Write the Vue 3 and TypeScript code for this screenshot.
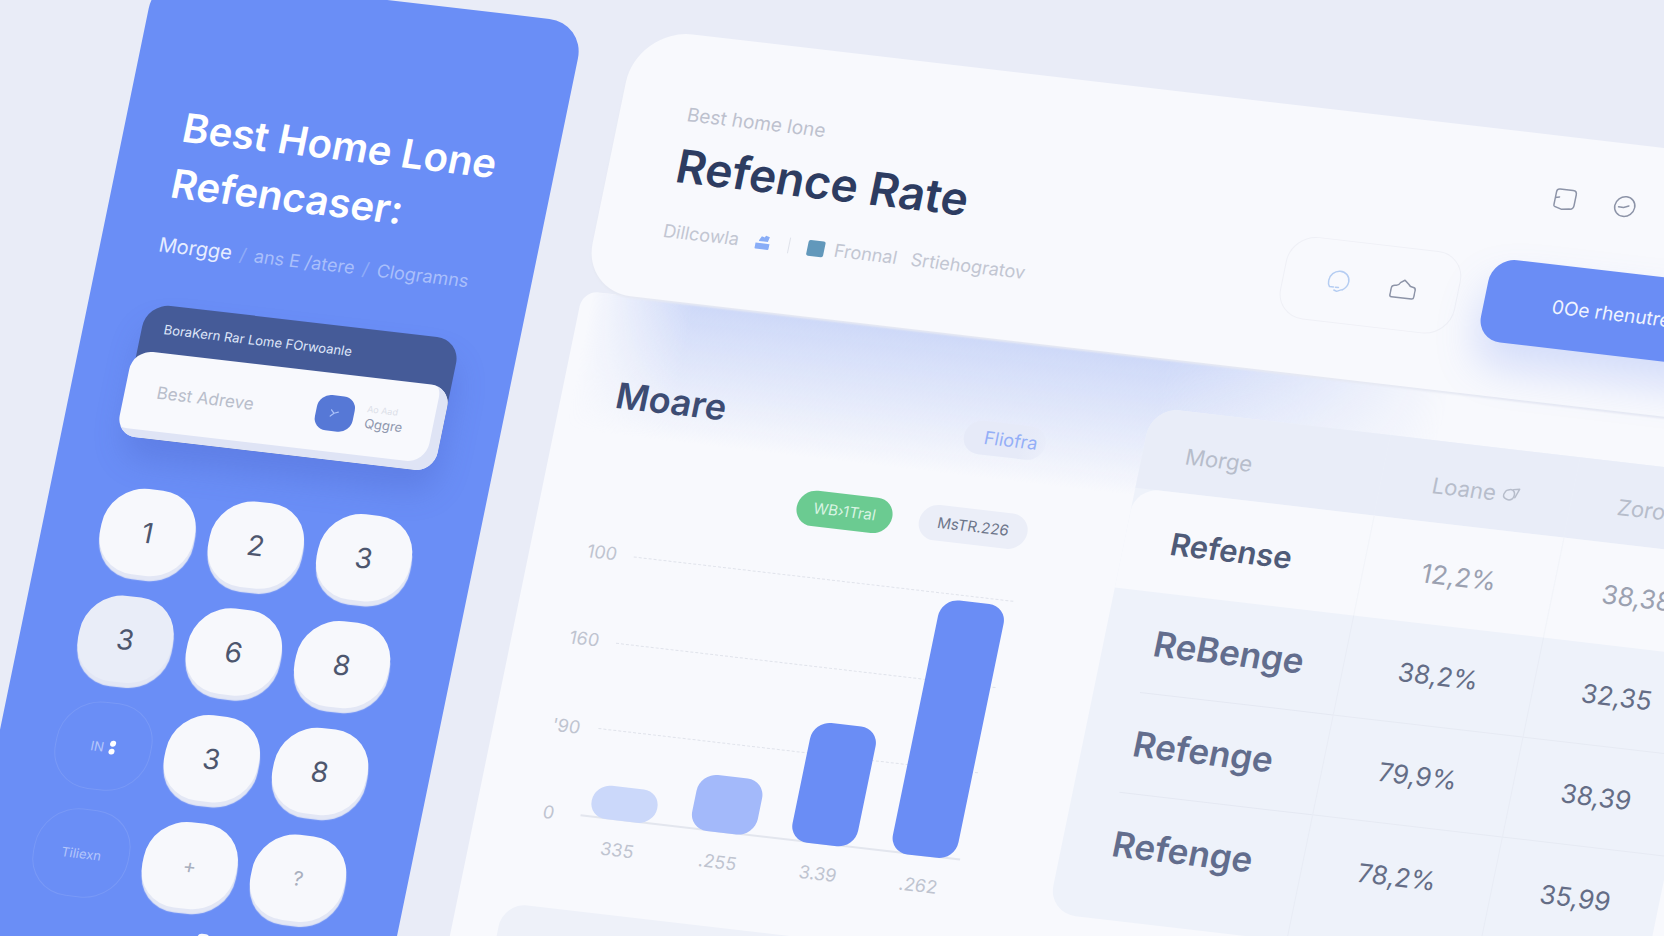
<script setup lang="ts">
interface Key {
  label: string
  tone: 'solid' | 'pressed' | 'ghost' | 'soft'
}
interface Bar {
  label: string
  height: number
  shade: string
}
interface RateRow {
  name: string
  rate: string
  amount: string
}

const keys: Key[] = [
  { label: '1', tone: 'solid' },
  { label: '2', tone: 'solid' },
  { label: '3', tone: 'solid' },
  { label: '3', tone: 'pressed' },
  { label: '6', tone: 'solid' },
  { label: '8', tone: 'solid' },
  { label: 'IN', tone: 'ghost' },
  { label: '3', tone: 'solid' },
  { label: '8', tone: 'solid' },
  { label: 'Tiliexn', tone: 'ghost' },
  { label: '+', tone: 'soft' },
  { label: '?', tone: 'soft' },
]

const ticks: string[] = ['100', '160', "'90", '0']

const bars: Bar[] = [
  { label: '335', height: 34, shade: '#cbd8fa' },
  { label: '.255', height: 57, shade: '#a3b9fa' },
  { label: '3.39', height: 122, shade: '#6a8df5' },
  { label: '.262', height: 259, shade: '#6a8df5' },
]

const rows: RateRow[] = [
  { name: 'Refense', rate: '12,2%', amount: '38,38' },
  { name: 'ReBenge', rate: '38,2%', amount: '32,35' },
  { name: 'Refenge', rate: '79,9%', amount: '38,39' },
  { name: 'Refenge', rate: '78,2%', amount: '35,99' },
]
</script>

<template>
  <div class="stage">
    <aside class="side">
      <h1 class="side-title">Best Home Lone Refencaser:</h1>
      <nav class="crumbs" aria-label="Breadcrumb">
        <a href="#morgge" class="crumb current">Morgge</a>
        <span class="slash">/</span>
        <a href="#aterre" class="crumb">ans E /atere</a>
        <span class="slash">/</span>
        <a href="#clogramns" class="crumb">Clogramns</a>
      </nav>

      <section class="finder">
        <label class="finder-label" for="finder">BoraKern Rar Lome FOrwoanle</label>
        <div class="finder-field">
          <input id="finder" class="finder-input" type="text" placeholder="Best Adreve" />
          <button class="finder-go" type="button" aria-label="Search">
            <svg viewBox="0 0 20 20" width="16" height="16">
              <path d="M5 6l4 4-4 4M9 10l5-2" />
            </svg>
          </button>
          <span class="finder-note">
            <small>Ao Aad</small>
            <span>Qggre</span>
          </span>
        </div>
      </section>

      <div class="keypad">
        <button v-for="(key, i) in keys" :key="i" type="button" class="key" :class="key.tone">
          {{ key.label }}
          <svg v-if="key.label === 'IN'" class="dots" viewBox="0 0 8 18" width="8" height="18">
            <circle cx="4" cy="5" r="3" />
            <circle cx="4" cy="13" r="3" />
          </svg>
        </button>
      </div>
      <div class="grip"></div>
    </aside>

    <main class="board">
      <header class="top">
        <div class="top-text">
          <p class="eyebrow">Best home lone</p>
          <h2 class="top-title">Refence Rate</h2>
          <div class="meta">
            <span class="meta-first">Dillcowla</span>
            <svg class="stack" viewBox="0 0 16 16" width="16" height="16">
              <path d="M4 6l2-4 3 1 1-2 4 1-1 5H4z" opacity=".8" />
              <path d="M1 9h14v5q0 1-1 1H2q-1 0-1-1z" opacity=".8" />
            </svg>
            <span class="bar-sep"></span>
            <span class="swatch"></span>
            <span>Fronnal</span>
            <span class="meta-last">Srtiehogratov</span>
          </div>
        </div>

        <div class="top-tools">
          <div class="mini">
            <button type="button" class="icon-btn" aria-label="Layout">
              <svg viewBox="0 0 24 24" width="24" height="24">
                <path d="M2 9V5q0-3 3-3h13q4 0 4 4v11q0 4-4 4l-8 1-7-2q-1 0-1-2V9M2 11l4-1" />
              </svg>
            </button>
            <button type="button" class="icon-btn" aria-label="Remove">
              <svg viewBox="0 0 24 24" width="24" height="24">
                <circle cx="12" cy="12" r="10" />
                <path d="M6 13l5 0 5-2" />
              </svg>
            </button>
          </div>
          <div class="actions">
            <div class="toggle">
              <button type="button" class="icon-btn pale" aria-label="Comments">
                <svg viewBox="0 0 24 24" width="24" height="24">
                  <path d="M4 18Q2 16 2 12A10 10 0 0 1 22 11Q22 17 17 20M4 18h4M9 21l3 1 4-2M10 18h3" />
                </svg>
              </button>
              <button type="button" class="icon-btn" aria-label="Cloud">
                <svg viewBox="0 0 26 22" width="26" height="22">
                  <path d="M3 20q-2 0-2-2v-7q0-3 4-3 3 0 4-3l4-3 5 4q1 2 4 2 3 0 3 3v7q0 2-2 2z" />
                </svg>
              </button>
            </div>
            <button type="button" class="cta">0Oe rhenutres</button>
          </div>
        </div>
      </header>

      <div class="panel">
        <div class="chart-col">
          <div class="chart-head">
            <h3>Moare</h3>
            <a href="#fliofra" class="tag">Fliofra</a>
          </div>
          <div class="pills">
            <span class="pill green">WB›1Tral</span>
            <span class="pill grey">MsTR.226</span>
          </div>
          <figure class="chart">
            <div class="axis-y">
              <span v-for="tick in ticks" :key="tick">{{ tick }}</span>
            </div>
            <div class="plot">
              <div class="lines">
                <i v-for="tick in ticks" :key="tick"></i>
              </div>
              <div class="bars">
                <div
                  v-for="bar in bars"
                  :key="bar.label"
                  class="bar"
                  :style="{ height: bar.height + 'px', background: bar.shade }"
                ></div>
              </div>
            </div>
            <figcaption class="axis-x">
              <span v-for="bar in bars" :key="bar.label">{{ bar.label }}</span>
            </figcaption>
          </figure>
          <div class="next-card"></div>
        </div>

        <table class="rates">
          <colgroup>
            <col class="c-name" />
            <col class="c-rate" />
            <col class="c-amount" />
          </colgroup>
          <thead>
            <tr>
              <th scope="col">Morge</th>
              <th scope="col">
                Loane
                <svg viewBox="0 0 18 16" width="18" height="16">
                  <path d="M5 4q4-2 6 1t0 7q-3 3-7 1T2 7q1-3 3-3zM10 3l6-1-3 9" />
                </svg>
              </th>
              <th scope="col">Zorope</th>
            </tr>
          </thead>
          <tbody>
            <tr v-for="(row, i) in rows" :key="i">
              <th scope="row">{{ row.name }}</th>
              <td>{{ row.rate }}</td>
              <td>{{ row.amount }}</td>
            </tr>
          </tbody>
        </table>
      </div>
    </main>
  </div>
</template>

<style>
body {
  margin: 0;
  background: #e9ecf7;
}
</style>

<style scoped>
.stage {
  display: flex;
  align-items: flex-start;
  height: 100vh;
  overflow: hidden;
  background: #e9ecf7;
  font-family: Inter, "Open Sans", sans-serif;
}
.side,
.board {
  transform: matrix(0.9935, 0.116, -0.202, 0.98, 0, 0);
  transform-origin: 0 0;
  box-sizing: border-box;
}
button {
  border: 0;
  padding: 0;
  font-family: inherit;
  cursor: pointer;
}
a {
  color: inherit;
  text-decoration: none;
}
svg {
  fill: none;
  stroke: currentColor;
  stroke-width: 1.5;
  stroke-linecap: round;
  stroke-linejoin: round;
}

/* Calculator sidebar */
.side {
  flex: 0 0 432px;
  min-width: 0;
  margin: -27px 0 0 156px;
  min-height: 1100px;
  padding: 122px 58px 0;
  border-radius: 36px;
  background: #6a8ef6;
  color: #fff;
}
.side-title {
  margin: 0 -16px 20px 0;
  font-size: 40px;
  line-height: 57px;
  font-weight: 600;
}
.crumbs {
  display: flex;
  align-items: baseline;
  gap: 8px;
  margin-right: -16px;
  font-size: 18px;
  line-height: 28px;
  color: #a9bffb;
  white-space: nowrap;
}
.crumb.current {
  font-size: 20px;
  color: #e6edff;
}
.slash {
  color: #8fabf8;
}
.finder {
  margin-top: 45px;
  border-radius: 24px;
  background: #455b98;
  box-shadow: 4px 22px 30px rgba(70, 90, 190, 0.28);
}
.finder-label {
  display: block;
  padding: 14px 22px;
  font-size: 13px;
  line-height: 20px;
  white-space: nowrap;
  color: #dfe6f8;
}
.finder-field {
  display: flex;
  align-items: center;
  margin-left: -4px;
  height: 79px;
  padding: 0 32px 8px 32px;
  border-radius: 20px;
  background: #f8f9fd;
  box-shadow: inset -10px -8px 0 #dfe4f5;
}
.finder-input {
  flex: 1;
  width: 0;
  min-width: 0;
  border: 0;
  padding: 0;
  outline: 0;
  background: none;
  font: 17px/24px Inter, sans-serif;
  color: #b4b9c8;
}
.finder-input::placeholder {
  color: #b9becb;
  opacity: 1;
}
.finder-go {
  display: grid;
  place-items: center;
  width: 38px;
  height: 36px;
  border-radius: 13px;
  background: #5678d6;
  color: #a9c0f8;
}
.finder-note {
  display: grid;
  margin-left: 12px;
  width: 46px;
  font-size: 13px;
  line-height: 16px;
  color: #8f97ae;
}
.finder-note small {
  font-size: 9px;
  line-height: 12px;
  color: #dcdfe8;
}
.keypad {
  display: grid;
  grid-template-columns: repeat(3, 94px);
  grid-auto-rows: 87px;
  gap: 22px 15px;
  margin-top: 50px;
}
.key {
  display: flex;
  align-items: center;
  justify-content: center;
  border-radius: 40px;
  background: #f7f8fc;
  box-shadow: 1px 5px 1px #e3e7f5;
  font-size: 28px;
  color: #4d566e;
}
.key.pressed {
  background: #e9edf8;
}
.key.soft {
  font-size: 20px;
  color: #a9afbe;
}
.key.ghost {
  gap: 4px;
  background: none;
  box-shadow: 0 0 0 1px rgba(255, 255, 255, 0.1);
  font-size: 13px;
  color: #b5c6fb;
}
.dots {
  fill: #fff;
  stroke: none;
}
.grip {
  width: 12px;
  height: 12px;
  margin: 23px 0 0 178px;
  border-radius: 4px;
  background: #f7f8fc;
}

/* Main board */
.board {
  flex: 1;
  min-width: 0;
  margin: 28px -188px 0 49px;
}
.top {
  position: relative;
  z-index: 1;
  display: flex;
  justify-content: space-between;
  padding: 49px 67px 55px;
  border-radius: 56px 56px 56px 48px;
  background: #f8f9fd;
  box-shadow: 0 2px 2px #e6e9f3;
}
.top-text {
  padding-top: 18px;
}
.eyebrow {
  margin: 0;
  font-size: 19px;
  line-height: 28px;
  color: #bdc1ce;
}
.top-title {
  margin: 8px 0 24px;
  font-size: 46px;
  line-height: 58px;
  font-weight: 600;
  color: #2d3c61;
}
.meta {
  display: flex;
  align-items: center;
  font-size: 18px;
  line-height: 28px;
  color: #c2c6d2;
  white-space: nowrap;
}
.meta-first {
  min-width: 92px;
}
.stack {
  fill: #6d9af5;
  stroke: none;
}
.bar-sep {
  width: 1px;
  height: 16px;
  margin: 0 18px;
  background: #dfe2ea;
}
.swatch {
  width: 17px;
  height: 16px;
  margin-right: 10px;
  border-radius: 2px;
  background: #6298bb;
}
.meta-last {
  margin-left: 14px;
}
.mini {
  display: flex;
  justify-content: flex-end;
  gap: 36px;
  padding-right: 129px;
}
.icon-btn {
  display: grid;
  place-items: center;
  width: 24px;
  height: 28px;
  background: none;
  color: #8d94a8;
}
.icon-btn.pale {
  color: #b5cdf2;
}
.actions {
  display: flex;
  gap: 27px;
  margin-top: 52px;
}
.toggle {
  display: flex;
  align-items: center;
  justify-content: center;
  gap: 40px;
  box-sizing: border-box;
  width: 176px;
  height: 84px;
  border: 1px solid #eff0f6;
  border-radius: 28px;
}
.cta {
  width: 260px;
  height: 84px;
  padding-left: 68px;
  border-radius: 24px;
  background: #6a8df5;
  box-shadow: 0 24px 40px rgba(106, 141, 245, 0.25);
  color: #f0f4ff;
  font-size: 19px;
  text-align: left;
}
.panel {
  position: relative;
  display: flex;
  align-items: flex-start;
  gap: 97px;
  min-height: 760px;
  padding: 0 33px 0 46px;
  border-radius: 16px 0 0 0;
  background: #f8f9fd;
}
.panel::before {
  content: "";
  position: absolute;
  inset: 0 200px auto 0;
  height: 140px;
  background: linear-gradient(#cdd8f8, rgba(205, 216, 248, 0.5) 50%, rgba(205, 216, 248, 0));
  mask-image: linear-gradient(90deg, transparent 1%, #000 11%, #000 58%, transparent 86%);
}
.chart-col {
  position: relative;
  flex: 0 0 440px;
}
.chart-head {
  display: flex;
  align-items: center;
  justify-content: space-between;
  margin-top: 76px;
  padding-left: 8px;
}
.chart-head h3 {
  margin: 0;
  font-size: 36px;
  line-height: 48px;
  font-weight: 600;
  color: #3d4c73;
}
.tag {
  padding: 0 8px 0 20px;
  border-radius: 17px;
  background: linear-gradient(90deg, #e6eaf8 70%, rgba(230, 234, 248, 0.4));
  font-size: 18px;
  line-height: 34px;
  color: #94aff7;
}
.pills {
  display: flex;
  justify-content: flex-end;
  gap: 27px;
  margin-top: 48px;
}
.pill {
  box-sizing: border-box;
  border-radius: 18px;
  font-size: 15px;
  line-height: 36px;
  text-align: center;
}
.green {
  width: 96px;
  background: #6bcb91;
  color: #d9f4e3;
}
.grey {
  width: 109px;
  background: #ebeef8;
  color: #6d758a;
}
.chart {
  display: grid;
  grid-template-columns: 52px 1fr;
  column-gap: 6px;
  margin: 51px 0 0;
  font-size: 18px;
  line-height: 24px;
  color: #bfc4d0;
}
.axis-y {
  display: flex;
  flex-direction: column;
  justify-content: space-between;
  margin: -12px 0;
  text-align: center;
}
.plot {
  display: grid;
  height: 265px;
}
.lines,
.bars {
  grid-area: 1 / 1;
  display: flex;
  justify-content: space-between;
}
.lines {
  flex-direction: column;
}
.lines i {
  border-top: 1px dashed #e0e3eb;
}
.lines i:last-child {
  border-top: 2px solid #e3e6ee;
}
.bars {
  align-items: flex-end;
  padding: 0 5px 0 8px;
}
.bar {
  width: 66px;
  border-radius: 18px;
}
.axis-x {
  grid-column: 2;
  display: flex;
  justify-content: space-between;
  margin-top: 18px;
  padding: 0 3px 0 10px;
  text-align: center;
}
.axis-x span {
  width: 66px;
}
.next-card {
  height: 160px;
  margin-top: 53px;
  border-radius: 24px;
  background: #eef1f9;
}

/* Rates table */
.rates {
  position: relative;
  flex: 1;
  margin-top: 50px;
  table-layout: fixed;
  border-collapse: separate;
  border-spacing: 0;
  border-radius: 28px;
  background: #eef2fa;
  color: #626d8d;
}
.c-name {
  width: 240px;
}
.c-rate {
  width: 191px;
}
.rates th,
.rates td {
  box-sizing: border-box;
  height: 102px;
  padding: 0;
}
.rates thead th {
  height: 82px;
  padding-top: 8px;
  background: #e9edf8;
  font-size: 22px;
  font-weight: 400;
  color: #b7bdcb;
}
.rates thead th:first-child {
  padding-left: 43px;
  border-radius: 28px 0 0 0;
  text-align: left;
}
.rates thead th:last-child {
  border-radius: 0 28px 0 0;
}
.rates tbody th {
  padding-left: 50px;
  background: linear-gradient(#e4e8f2, #e4e8f2) 46px 100% / 100% 1px no-repeat;
  font-size: 35px;
  font-weight: 600;
  text-align: left;
}
.rates td {
  border-left: 1px solid #e8ecf5;
  border-bottom: 1px solid #e6eaf3;
  font-size: 26px;
  text-align: center;
  color: #646d86;
}
.rates tbody tr:first-child th,
.rates tbody tr:first-child td {
  background: #f8f9fd;
  border-color: #f2f4f9;
  border-bottom: 0;
}
.rates tbody tr:first-child th {
  padding-left: 46px;
  border-radius: 24px 0 0 0;
  font-size: 31px;
  color: #4f5b78;
}
.rates tbody tr:first-child td {
  color: #9ba1b1;
}
.rates tbody tr:last-child th,
.rates tbody tr:last-child td {
  height: 128px;
  padding-bottom: 26px;
  border-bottom: 0;
}
.rates tbody tr:last-child th {
  background: none;
}
</style>
